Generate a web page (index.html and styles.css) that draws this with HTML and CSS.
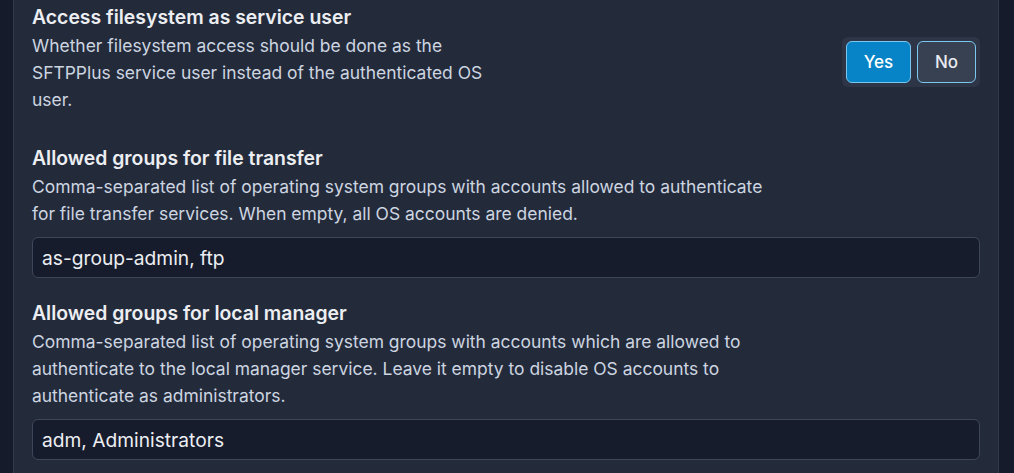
FILE: index.html
```html
<!DOCTYPE html>
<html lang="en">
<head>
<meta charset="utf-8">
<title>Settings</title>
<link rel="stylesheet" href="styles.css">
</head>
<body>
<div class="page">
  <div class="panel">
    <div class="field field-row">
      <div class="field-text">
        <div class="label">Access filesystem as service user</div>
        <div class="desc narrow">Whether filesystem access should be done as the SFTPPlus service user instead of the authenticated OS user.</div>
      </div>
      <div class="toggle">
        <button class="btn active">Yes</button>
        <button class="btn">No</button>
      </div>
    </div>

    <div class="field">
      <div class="label">Allowed groups for file transfer</div>
      <div class="desc">Comma-separated list of operating system groups with accounts allowed to authenticate for file transfer services. When empty, all OS accounts are denied.</div>
      <div class="input">as-group-admin, ftp</div>
    </div>

    <div class="field">
      <div class="label">Allowed groups for local manager</div>
      <div class="desc">Comma-separated list of operating system groups with accounts which are allowed to authenticate to the local manager service. Leave it empty to disable OS accounts to authenticate as administrators.</div>
      <div class="input">adm, Administrators</div>
    </div>
  </div>
</div>
</body>
</html>
```
FILE: styles.css
```css
html, body {
  margin: 0;
  padding: 0;
  background: #161b2b;
  height: 100%;
  overflow: hidden;
}
body {
  font-family: Inter, "Noto Sans", sans-serif;
}
.page {
  padding: 0 15px 0 13px;
  height: 100%;
}
.panel {
  background: #232b3b;
  border-left: 1px solid #323a4b;
  border-right: 1px solid #323a4b;
  padding: 3px 18px 0 18px;
  height: 100%;
  box-sizing: border-box;
}
.field {
  margin-bottom: 21px;
}
.field-row {
  display: flex;
  align-items: center;
  justify-content: space-between;
  margin-bottom: 31px;
}
.label {
  color: #eceef2;
  font-size: 19.4px;
  font-weight: 600;
  line-height: 29px;
}
.desc {
  color: #cdd5e0;
  font-size: 17.45px;
  line-height: 27px;
  max-width: 745px;
}
.desc.narrow {
  max-width: 473px;
}
.input {
  margin-top: 10px;
  background: #171c2c;
  border: 1px solid #3e4759;
  border-radius: 6px;
  height: 39px;
  padding: 0 9px;
  display: flex;
  align-items: center;
  color: #eceef2;
  font-size: 19.2px;
}
.toggle {
  display: flex;
  gap: 6px;
  background: #2d3546;
  border-radius: 6px;
  padding: 4px;
  margin-top: 8px;
}
.btn {
  font-family: Inter, "Noto Sans", sans-serif;
  font-size: 17px;
  font-weight: 500;
  color: #e8ebf0;
  background: #374152;
  border: 1px solid #7ac8f0;
  border-radius: 6px;
  height: 42px;
  width: 59px;
  padding: 0;
  cursor: pointer;
}
.btn.active {
  background: #0784c7;
  color: #ffffff;
  width: 65px;
}
```
